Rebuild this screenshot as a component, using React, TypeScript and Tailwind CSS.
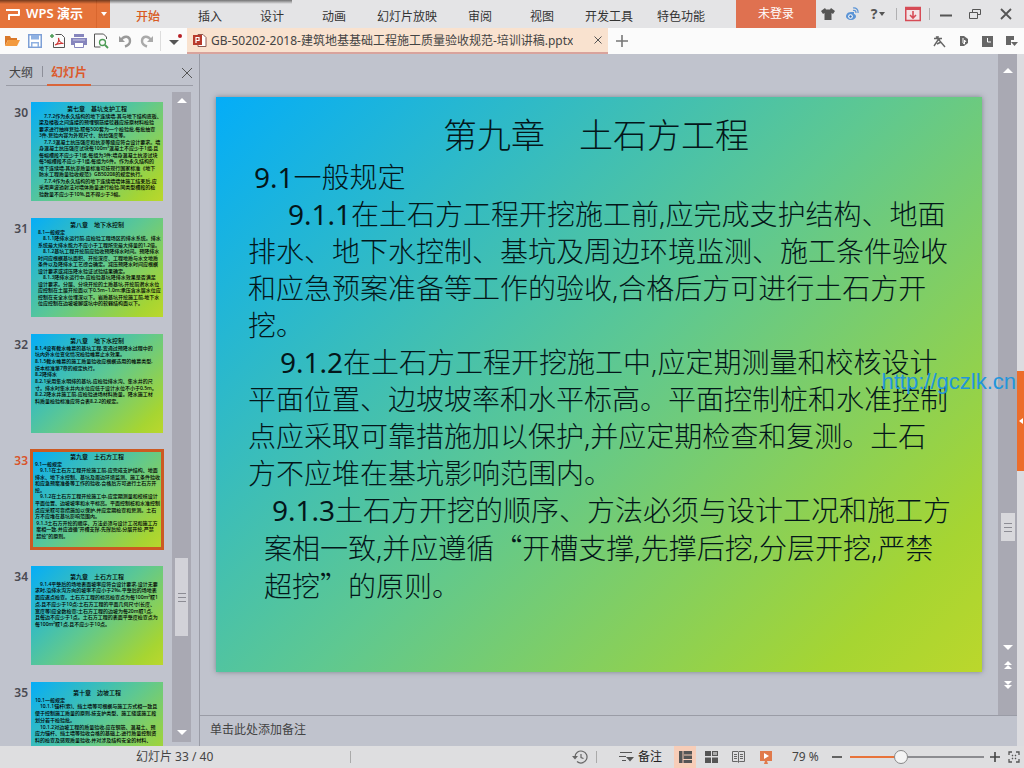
import { useState } from 'react'
import type { ReactNode } from 'react'
import clsx from 'clsx'

const MENU = [
  { label: '开始', width: 'w-[62px]', active: true },
  { label: '插入', width: 'w-[62px]' },
  { label: '设计', width: 'w-[62px]' },
  { label: '动画', width: 'w-[62px]' },
  { label: '幻灯片放映', width: 'w-[84px]' },
  { label: '审阅', width: 'w-[62px]' },
  { label: '视图', width: 'w-[62px]' },
  { label: '开发工具', width: 'w-[72px]' },
  { label: '特色功能', width: 'w-[72px]' },
]

type Thumb = { no: number; title: string; height: string; top: string; inset: string; lines: string[] }

const THUMBS: Thumb[] = [
  {
    no: 30,
    title: '第七章　基坑支护工程',
    height: 'h-[91px]',
    top: 'pt-1',
    inset: 'pl-2',
    lines: [
      '　7.7.2作为永久结构的地下连续墙,其与地下结构底板、',
      '梁及楼板之间连接的预埋钢筋接驳器应按原材料检验',
      '要求进行抽样复验,取每500套为一个检验批,每批抽查',
      '3件,复验内容为外观尺寸、抗拉强度等。',
      '　7.7.3混凝土抗压强度和抗渗等级应符合设计要求。墙',
      '身混凝土抗压强度试块每100m³混凝土不应少于1组,且',
      '每幅槽段不应少于1组,每组为3件;墙身混凝土抗渗试块',
      '每5幅槽段不应少于1组,每组为6件。作为永久结构的',
      '地下连续墙,其抗渗质量标准可按现行国家标准《地下',
      '防水工程质量验收规范》GB50208的规定执行。',
      '　7.7.4作为永久结构的地下连续墙墙体施工结束后,应',
      '采用声波透射法对墙体质量进行检验,同类型槽段的检',
      '验数量不应少于10%,且不得少于3幅。',
    ],
  },
  {
    no: 31,
    title: '第八章　地下水控制',
    height: 'h-[84px]',
    top: 'pt-1',
    inset: 'pl-[7px]',
    lines: [
      '8.1一般规定',
      '　8.1.1降排水运行前,应检验工程场区的排水系统。排水',
      '系统最大排水能力不应小于工程所需最大排量的1.2倍。',
      '　8.1.2基坑工程开挖前应验收预降排水时间。预降排水',
      '时间应根据基坑面积、开挖深度、工程地质与水文地质',
      '条件以及降排水工艺综合确定。减压预降水时间应根据',
      '设计要求或减压降水验证试验结果确定。',
      '　8.1.3降排水运行中,应检验基坑降排水效果是否满足',
      '设计要求。分层、分块开挖的土质基坑,开挖前潜水水位',
      '应控制在土层开挖面以下0.5m~1.0m;承压含水层水位应',
      '控制在安全水位埋深以下。岩质基坑开挖施工前,地下水',
      '位应控制在边坡坡脚或坑中的软弱结构面以下。',
    ],
  },
  {
    no: 32,
    title: '第八章　地下水控制',
    height: 'h-[66px]',
    top: 'pt-1',
    inset: 'pl-1',
    lines: [
      '8.1.4设有截水帷幕的基坑工程,宜通过预降水过程中的',
      '坑内外水位变化情况检验帷幕止水效果。',
      '8.1.5截水帷幕的施工质量验收应根据选用的帷幕类型,',
      '按本标准第7章的规定执行。',
      '8.2降排水',
      '8.2.1采用集水明排的基坑,应检验排水沟、集水井的尺',
      '寸。排水时集水井内水位应低于设计水位不小于0.5m。',
      '8.2.2降水井施工前,应检验进场材料质量。降水施工材',
      '料质量检验标准应符合表8.2.2的规定。',
    ],
  },
  {
    no: 33,
    title: '第九章　土石方工程',
    height: 'h-[85px]',
    top: 'pt-1',
    inset: 'pl-1',
    lines: [
      '9.1一般规定',
      '　9.1.1在土石方工程开挖施工前,应完成支护结构、地面',
      '排水、地下水控制、基坑及周边环境监测、施工条件验收',
      '和应急预案准备等工作的验收,合格后方可进行土石方开',
      '挖。',
      '　9.1.2在土石方工程开挖施工中,应定期测量和校核设计',
      '平面位置、边坡坡率和水平标高。平面控制桩和水准控制',
      '点应采取可靠措施加以保护,并应定期检查和复测。土石',
      '方不应堆在基坑影响范围内。',
      ' 9.1.3土石方开挖的顺序、方法必须与设计工况和施工方',
      ' 案相一致,并应遵循“开槽支撑,先撑后挖,分层开挖,严禁',
      ' 超挖”的原则。',
    ],
  },
  {
    no: 34,
    title: '第九章　土石方工程',
    height: 'h-[53px]',
    top: 'pt-2',
    inset: 'pl-1',
    lines: [
      '　9.1.4平整后的场地表面坡率应符合设计要求,设计无要',
      '求时,沿排水沟方向的坡率不应小于2‰,平整后的场地表',
      '面应逐点检查。土石方工程的标高检查点为每100m²取1',
      '点,且不应少于10点;土石方工程的平面几何尺寸(长度、',
      '宽度等)应全数检查;土石方工程的边坡为每20m取1点,',
      '且每边不应少于1点。土石方工程的表面平整度检查点为',
      '每100m²取1点,且不应少于10点。',
    ],
  },
  {
    no: 35,
    title: '第十章　边坡工程',
    height: 'h-[53px]',
    top: 'pt-2',
    inset: 'pl-1',
    lines: [
      '10.1一般规定',
      '　10.1.1锚杆(索)、挡土墙等可根据与施工方式相一致且',
      '便于控制施工质量的原则,按支护类型、施工缝或施工段',
      '划分若干检验批。',
      '　10.1.2对边坡工程的质量验收,应在钢筋、混凝土、预',
      '应力锚杆、挡土墙等验收合格的基础上,进行质量控制资',
      '料的检查及感观质量验收,并对涉及结构安全的材料、',
    ],
  },
]

const SLIDE_LINES = [
  { no: '9.1', text: '一般规定', indent: 'pl-1.5' },
  { no: '9.1.1', text: '在土石方工程开挖施工前,应完成支护结构、地面', indent: 'pl-10' },
  { text: '排水、地下水控制、基坑及周边环境监测、施工条件验收', indent: 'pl-0' },
  { text: '和应急预案准备等工作的验收,合格后方可进行土石方开', indent: 'pl-0' },
  { text: '挖。', indent: 'pl-0' },
  { no: '9.1.2', text: '在土石方工程开挖施工中,应定期测量和校核设计', indent: 'pl-8' },
  { text: '平面位置、边坡坡率和水平标高。平面控制桩和水准控制', indent: 'pl-0' },
  { text: '点应采取可靠措施加以保护,并应定期检查和复测。土石', indent: 'pl-0' },
  { text: '方不应堆在基坑影响范围内。', indent: 'pl-0' },
  { no: '9.1.3', text: '土石方开挖的顺序、方法必须与设计工况和施工方', indent: 'pl-6' },
  { text: '案相一致,并应遵循“开槽支撑,先撑后挖,分层开挖,严禁', indent: 'pl-4' },
  { text: '超挖”的原则。', indent: 'pl-4' },
]

const GRADIENT = 'bg-[linear-gradient(135deg,#04adf8_0%,#5ec891_50%,#a6d532_88%,#bbd72c_100%)]'

function Svg({ children, w = 16, h = 16 }: { children: ReactNode; w?: number; h?: number }) {
  return (
    <svg width={w} height={h} viewBox={`0 0 ${w} ${h}`} fill="none" aria-hidden="true">
      {children}
    </svg>
  )
}

function IconButton({ label, className, children }: { label: string; className?: string; children: ReactNode }) {
  return (
    <button type="button" aria-label={label} className={clsx('flex shrink-0 items-center justify-center', className)}>
      {children}
    </button>
  )
}

function TitleBar() {
  return (
    <header className="flex h-7 shrink-0 items-stretch bg-[#e4e4e6]">
      <button type="button" className="flex w-[110px] shrink-0 items-center bg-[#e5733a] pl-1.5 text-white">
        <Svg w={16} h={14}>
          <path d="M0 3h13v5H3v5" stroke="#fff" strokeWidth="2" strokeLinejoin="round" />
        </Svg>
        <span className="ml-1 text-[13px] font-semibold whitespace-nowrap">WPS 演示</span>
        <span className="ml-auto flex h-full w-3.5 items-center justify-center border-l border-[#d9662e]">
          <Svg w={6} h={4}><path d="M0 0h6L3 4z" fill="#fff" /></Svg>
        </span>
      </button>
      <nav className="ml-[7px] flex items-stretch">
        {MENU.map((m) => (
          <button
            key={m.label}
            type="button"
            className={clsx('pt-1.5 text-center whitespace-nowrap', m.width, m.active ? 'font-medium text-[#d85a22]' : 'text-[#333]')}
          >
            {m.label}
          </button>
        ))}
      </nav>
      <div className="ml-auto flex items-stretch">
        <button type="button" className="w-20 bg-[#df7150] text-white">未登录</button>
        <IconButton label="皮肤" className="w-6">
          <Svg w={14} h={14}><path d="M4 1 0 4l2 3 1.500-1V13h7V6L12 7l2-3-4-3-1 1.500H5z" fill="#555" /></Svg>
        </IconButton>
        <IconButton label="微博" className="w-6">
          <Svg w={14} h={14}>
            <path d="M6 5C2 5 1 8 1 9.500S3 13 6 13s5-2 5-3.500S10 7 9 7V5z" fill="#5b94d6" />
            <circle cx="5.500" cy="9.500" r="2.300" fill="#fff" />
            <circle cx="5.500" cy="9.500" r="1.200" fill="#3a6fb5" />
            <path d="M8 3.500c2-.5 3 .5 3 2.500M8 1c3-.5 5.500 1.500 5 5" stroke="#5b94d6" strokeWidth="1.200" />
          </Svg>
        </IconButton>
        <IconButton label="帮助" className="w-7 gap-0.5">
          <span className="text-sm font-bold text-[#555]">?</span>
          <Svg w={6} h={4}><path d="M0 0h6L3 4z" fill="#555" /></Svg>
        </IconButton>
        <span className="my-2 ml-1 w-px bg-[#b0b0b2]" />
        <IconButton label="下载" className="w-8">
          <Svg w={16} h={16}>
            <path d="M.75 1.500h14.500v13H.75z" fill="#f3e4e6" stroke="#d64b56" strokeWidth="1.500" />
            <path d="M0 1h16v3H0z" fill="#d64b56" />
            <path d="M8 5v7M5 9l3 3 3-3" stroke="#d64b56" strokeWidth="1.600" />
          </Svg>
        </IconButton>
        <span className="my-2 w-px bg-[#b0b0b2]" />
        <IconButton label="最小化" className="w-8">
          <Svg w={12} h={12}><path d="M0 7.500h12" stroke="#555" strokeWidth="2" /></Svg>
        </IconButton>
        <IconButton label="还原" className="w-[26px]">
          <Svg w={12} h={12}><path d="M3.500 4V1.500h8v5H9M.5 4.500h8v6h-8z" stroke="#555" /></Svg>
        </IconButton>
        <IconButton label="关闭" className="w-9">
          <Svg w={12} h={12}><path d="m1 1 10 10M11 1 1 11" stroke="#555" strokeWidth="1.800" /></Svg>
        </IconButton>
      </div>
    </header>
  )
}

function QuickBar() {
  return (
    <div className="flex h-[26px] shrink-0 items-stretch bg-[#fbfbfb]">
      <div className="flex w-[187px] shrink-0 items-center pl-1">
        <IconButton label="打开" className="w-[22px] justify-start">
          <Svg>
            <path d="M1 13V3h5l1 2h6v2H4z" fill="#d9782a" />
            <path d="M4 7h12l-3 6H1z" fill="#f39a3f" />
          </Svg>
        </IconButton>
        <IconButton label="保存" className="w-[22px] justify-start pl-0.5">
          <Svg w={14} h={14}>
            <path d="M.75.75h12.500v12.500H.75z" fill="#fff" stroke="#7d9fd6" strokeWidth="1.500" />
            <path d="M3 1h8v4.500H3zM3 8h8v5H3z" fill="#8fb1e2" />
            <path d="M4.500 9.500h5v3h-5z" fill="#fff" />
          </Svg>
        </IconButton>
        <IconButton label="输出为PDF" className="w-[22px] justify-start">
          <Svg w={18} h={16}>
            <path d="M7.500 1.500h6l3 3v10h-11V9" stroke="#555" />
            <path d="M4 1v4M2 3h4" stroke="#4c9b55" strokeWidth="1.500" />
            <path d="M7 12c4-2 4-5 3.500-7 .5 4 2 5 5 5.500-3-.5-6 0-8.500 1.500z" stroke="#cf3737" strokeWidth="1.200" />
          </Svg>
        </IconButton>
        <IconButton label="打印" className="w-[22px] justify-start pl-px">
          <Svg>
            <path d="M3 1h10v3H3z" fill="#8685bd" />
            <path d="M0 5h16v7H0z" fill="#8685bd" />
            <path d="M3.500 9.500h9v5h-9z" fill="#fff" stroke="#8685bd" />
            <path d="M2 7h12" stroke="#c9c8e6" />
          </Svg>
        </IconButton>
        <IconButton label="打印预览" className="w-[22px] justify-start pl-0.5">
          <Svg>
            <path d="M12.500 6V4l-3-3H.5v13h6" stroke="#555" />
            <circle cx="8.500" cy="9.500" r="3" stroke="#4c9b55" strokeWidth="1.300" />
            <path d="m11 12 3 3" stroke="#4c9b55" strokeWidth="1.800" />
          </Svg>
        </IconButton>
        <IconButton label="撤销" className="w-[22px]">
          <Svg w={14} h={14}><path d="M3 6c3-5 9-4 9 1 0 3-2 4.500-5 5.500" stroke="#9a9a9a" strokeWidth="2.400" /><path d="M1 2v6h6z" fill="#9a9a9a" /></Svg>
        </IconButton>
        <IconButton label="恢复" className="w-[22px]">
          <Svg w={14} h={14}><path d="M11 6C8 1 2 2 2 7c0 3 2 4.500 5 5.500" stroke="#aaa" strokeWidth="2.400" /><path d="M13 2v6H7z" fill="#aaa" /></Svg>
        </IconButton>
        <span className="ml-0.5 h-5 w-px bg-[#ddd]" />
        <IconButton label="自定义" className="ml-1.5 w-4">
          <Svg w={14} h={14}><path d="M1 6h10l-5 5z" fill="#555" /><circle cx="12" cy="2" r="2" fill="#b71f26" /></Svg>
        </IconButton>
      </div>
      <div className="flex w-[421px] min-w-0 items-center border-b-2 border-[#d9a39c] bg-[#f9e2cf] pl-1.5">
        <Svg w={14} h={15}>
          <path d="M5 1.500h5l3 3v9H5z" fill="#fff" stroke="#8d5a52" />
          <path d="M0 2h9v10H0z" fill="#b83a2c" />
          <path d="M3 10V4.500h3v3H3" stroke="#fff" strokeWidth="1.200" />
        </Svg>
        <span className="ml-1 truncate pt-0.5 text-[#444]">GB-50202-2018-建筑地基基础工程施工质量验收规范-培训讲稿.pptx</span>
        <IconButton label="关闭标签" className="mr-0.5 ml-auto w-4">
          <Svg w={8} h={8}><path d="m.5.5 7 7M7.500.5l-7 7" stroke="#555" /></Svg>
        </IconButton>
      </div>
      <IconButton label="新建标签" className="w-7">
        <Svg w={12} h={12}><path d="M6 0v12M0 6h12" stroke="#777" strokeWidth="1.600" /></Svg>
      </IconButton>
      <div className="ml-auto flex items-center gap-3 pr-1.5">
        <IconButton label="工具">
          <Svg w={13} h={13}><path d="M1 3.500h8M5 1v4L1 11M6 5l6 7M8 7l-4 2M3 1.500l4 4" stroke="#666" strokeWidth="1.400" /></Svg>
        </IconButton>
        <IconButton label="文档">
          <Svg w={12} h={12}><path d="M2 1h4l4 3v4l-4 3H2z" fill="#666" /><path d="M5 3v5l1.500 1V5L8 7" stroke="#fff" /></Svg>
        </IconButton>
        <IconButton label="历史">
          <Svg w={11} h={11}><path d="M0 0h11v11H0z" fill="#666" /><path d="M5.500 2v4H9" stroke="#fff" /></Svg>
        </IconButton>
        <IconButton label="更多">
          <Svg w={13} h={12}><path d="M1 1h8v4H6v5H1z" fill="#666" /><path d="M6 7h7l-3.500 4z" fill="#666" /></Svg>
        </IconButton>
      </div>
    </div>
  )
}

function Thumbnail({ thumb, active, onSelect }: { thumb: Thumb; active: boolean; onSelect: () => void }) {
  return (
    <li className="flex items-start">
      <span className={clsx('w-7 shrink-0 pt-[3px] text-right text-xs font-semibold', active ? 'text-[#d9542b]' : 'text-[#4a4a52]')}>
        {thumb.no}
      </span>
      <button
        type="button"
        onClick={onSelect}
        aria-label={`幻灯片 ${thumb.no}`}
        className={clsx(
          'ml-[3px] h-[99px] min-w-0 flex-1 overflow-hidden text-left',
          GRADIENT,
          active && 'outline-3 -outline-offset-2 outline-[#cc5a22]',
        )}
      >
        <span className={clsx('flex h-full flex-col font-medium text-black', thumb.top)}>
          <span className={clsx('flex shrink-0 flex-col justify-between', thumb.height)}>
            <span className="block text-center text-[6px] leading-[6px] whitespace-pre">{thumb.title}</span>
            {thumb.lines.map((line) => (
              <span key={line} className={clsx('block text-[5px] leading-[6px] whitespace-pre', thumb.inset)}>{line}</span>
            ))}
          </span>
        </span>
      </button>
    </li>
  )
}

function SlidePanel() {
  const [current, setCurrent] = useState(33)
  return (
    <aside className="flex w-[200px] shrink-0 flex-col border-r border-[#9a9ca6]">
      <div className="mx-1.5 flex h-8 shrink-0 items-stretch border-b border-[#9a9ca6]">
        <button type="button" className="px-[3px] pt-1.5 text-[#444]">大纲</button>
        <span className="mt-3 mb-2 ml-1.5 w-px bg-[#8d8f99]" />
        <button type="button" className="-mb-px ml-1 border-b-2 border-[#d9653a] px-1 pt-2 font-bold text-[#dc5a2c]">幻灯片</button>
        <IconButton label="关闭窗格" className="ml-auto pt-1.5">
          <Svg w={12} h={12}><path d="m1 1 10 10M11 1 1 11" stroke="#555" /></Svg>
        </IconButton>
      </div>
      <div className="flex min-h-0 flex-1">
        <ul className="flex w-[164px] flex-col gap-[17px] overflow-hidden pt-4 pr-px">
          {THUMBS.map((t) => (
            <Thumbnail key={t.no} thumb={t} active={t.no === current} onSelect={() => setCurrent(t.no)} />
          ))}
        </ul>
        <div className="mt-1.5 mb-1 ml-2 flex w-[19px] flex-col items-center bg-[#a9a9b3]">
          <IconButton label="向上滚动" className="h-4 w-full">
            <Svg w={10} h={5}><path d="M0 5h10L5 0z" fill="#fff" /></Svg>
          </IconButton>
          <div className="flex-[451]" />
          <div className="flex w-[13px] flex-[78] flex-col items-center justify-center gap-[3px] bg-[#d2d2d8]">
            <span className="h-px w-2 bg-[#8c8c94]" />
            <span className="h-px w-2 bg-[#8c8c94]" />
            <span className="h-px w-2 bg-[#8c8c94]" />
          </div>
          <div className="flex-[86]" />
          <IconButton label="向下滚动" className="h-5 w-full">
            <Svg w={10} h={5}><path d="M0 0h10L5 5z" fill="#fff" /></Svg>
          </IconButton>
        </div>
      </div>
    </aside>
  )
}

// curly quotes take a full em in the CJK face
function SlideText({ text }: { text: string }) {
  return text.split(/([“”])/).map((part, i) =>
    part === '“' || part === '”' ? (
      <span key={i} className="font-['Noto_Sans_CJK_SC',sans-serif]">{part}</span>
    ) : (
      part
    ),
  )
}

function Editor() {
  return (
    <div className="flex min-h-0 flex-1">
      <main className="min-w-0 flex-1 overflow-hidden px-4 pt-[43px]">
        <article className={clsx('aspect-[4/3] overflow-hidden pt-4 text-[#04161a] shadow-[0_0_5px_rgba(60,70,80,0.5)]', GRADIENT)}>
          <h1 className="pr-1.5 text-center text-[34px] leading-[44px] font-light whitespace-nowrap">第九章　土石方工程</h1>
          <div className="mt-0.5 pl-8 text-[28px] leading-[37px] font-light whitespace-nowrap">
            {SLIDE_LINES.map((l) => (
              <p key={l.text} className={l.indent}>
                {l.no && <span className="font-normal">{l.no}</span>}
                <SlideText text={l.text} />
              </p>
            ))}
          </div>
        </article>
      </main>
      <div className="flex w-[19px] shrink-0 flex-col items-center bg-[#a9a9b3]">
        <IconButton label="上一屏" className="h-8 w-full">
          <Svg w={10} h={5}><path d="M0 5h10L5 0z" fill="#fff" /></Svg>
        </IconButton>
        <div className="flex-[428]" />
        <div className="flex w-3.5 flex-[28] flex-col items-center justify-center gap-[3px] bg-[#d8d8dc]">
          <span className="h-px w-2 bg-[#8c8c94]" />
          <span className="h-px w-2 bg-[#8c8c94]" />
          <span className="h-px w-2 bg-[#8c8c94]" />
        </div>
        <div className="flex-[98]" />
        <IconButton label="下一屏" className="h-4 w-full">
          <Svg w={10} h={5}><path d="M0 0h10L5 5z" fill="#fff" /></Svg>
        </IconButton>
        <IconButton label="上一张" className="h-5 w-full">
          <Svg w={8} h={8}><path d="M0 4h8L4 0zM0 8h8L4 4z" fill="#fff" /></Svg>
        </IconButton>
        <IconButton label="下一张" className="mb-5 h-5 w-full">
          <Svg w={8} h={8}><path d="M0 0h8L4 4zM0 4h8L4 8z" fill="#fff" /></Svg>
        </IconButton>
      </div>
    </div>
  )
}

function StatusBar() {
  const [zoom, setZoom] = useState(79)
  const pos = Math.round(((zoom - 10) / 190) * 100)
  return (
    <footer className="flex h-[22px] shrink-0 items-center bg-[#dedee0] text-[#444]">
      <span className="ml-[136px] w-[215px] border-r border-[#aaa] leading-3 whitespace-nowrap">幻灯片 33 / 40</span>
      <div className="ml-auto flex items-center">
        <IconButton label="备份">
          <Svg w={16} h={14}>
            <path d="M3 7a6 6 0 1 1 2 4.500" stroke="#666" strokeWidth="1.200" />
            <path d="M0 6h6L3 9.500z" fill="#666" />
            <path d="M9 4v3.500l2.500 1" stroke="#666" strokeWidth="1.200" />
          </Svg>
        </IconButton>
        <span className="ml-2 h-3 w-px bg-[#aaa]" />
        <button type="button" className="ml-[22px] flex items-center gap-1 whitespace-nowrap text-[#222]">
          <Svg w={15} h={12}><path d="M1 1.500h12M0 5.500h7M3 9.500h4" stroke="#555" /><path d="M7 6h8l-4 4.500z" fill="#555" /></Svg>
          备注
        </button>
        <IconButton label="普通视图" className="ml-3 h-[22px] w-[22px] bg-[#f7cdb8]">
          <Svg w={13} h={12}><path d="M0 0h3.500v12H0zM4.500 0H13v8H4.500zM4.500 9H13v3H4.500z" fill="#555" /><path d="M5 4h8" stroke="#f7cdb8" /></Svg>
        </IconButton>
        <IconButton label="幻灯片浏览" className="ml-[9px]">
          <Svg w={13} h={12}><path d="M0 0h6v5H0zM7 0h6v5H7zM0 6.500h6V12H0zM7 6.500h6V12H7z" fill="#555" /><path d="M8 1h4v3H8z" fill="#aaa" /></Svg>
        </IconButton>
        <IconButton label="阅读视图" className="ml-3.5">
          <Svg w={13} h={12}><path d="M.5.5h5.500l.5 1 .5-1h5.500v10H7.500l-1 1-1-1H.5zM6.500 1.500V11M2 3.500h3M2 5.500h3M2 7.500h3M8 3.500h3M8 5.500h3M8 7.500h3" stroke="#666" /></Svg>
        </IconButton>
        <IconButton label="放映" className="ml-[15px]">
          <Svg w={12} h={13}><path d="M0 0h12v10H7l1 3H4l1-3H0z" fill="#e07a4c" /><path d="M4 2v6l5-3z" fill="#fff" /></Svg>
        </IconButton>
        <span className="ml-5 w-8 whitespace-nowrap">{zoom} %</span>
        <IconButton label="缩小" className="ml-2">
          <Svg w={10} h={10}><path d="M0 5h10" stroke="#444" strokeWidth="1.600" /></Svg>
        </IconButton>
        <input
          type="range"
          min={10}
          max={200}
          value={zoom}
          onChange={(e) => setZoom(Number(e.target.value))}
          aria-label="显示比例"
          className="ml-2 h-4 w-[134px] appearance-none bg-[length:100%_2px] bg-center bg-no-repeat [&::-webkit-slider-thumb]:h-3.5 [&::-webkit-slider-thumb]:w-3.5 [&::-webkit-slider-thumb]:appearance-none [&::-webkit-slider-thumb]:rounded-full [&::-webkit-slider-thumb]:border [&::-webkit-slider-thumb]:border-[#888] [&::-webkit-slider-thumb]:bg-[#f4f4f4]"
          style={{ backgroundImage: `linear-gradient(to right, #e8733a ${pos}%, #8c8c90 ${pos}%)` }}
        />
        <IconButton label="放大" className="ml-1.5">
          <Svg w={10} h={10}><path d="M0 5h10M5 0v10" stroke="#444" strokeWidth="1.600" /></Svg>
        </IconButton>
        <IconButton label="适应窗口" className="mr-1 ml-2">
          <Svg w={12} h={12}><path d="M1 4V1h3M8 1h3v3M11 8v3H8M4 11H1V8M4 4l1 1M8 4 7 5M4 8l1-1M8 8 7 7" stroke="#555" strokeWidth="1.300" /></Svg>
        </IconButton>
      </div>
    </footer>
  )
}

export default function App() {
  return (
    <div className="relative flex h-screen flex-col overflow-hidden bg-[#c0c3cd] font-['Noto_Sans','Noto_Sans_CJK_SC',sans-serif] text-xs">
      <TitleBar />
      <QuickBar />
      <div className="flex min-h-0 flex-1">
        <SlidePanel />
        <div className="flex min-w-0 flex-1 flex-col">
          <Editor />
          <textarea
            aria-label="备注"
            placeholder="单击此处添加备注"
            className="h-[31px] shrink-0 resize-none border-t border-[#9a9ca6] px-2.5 pt-1.5 leading-4 outline-none placeholder:text-[#444]"
          />
        </div>
        <div className="flex w-[7px] shrink-0 flex-col bg-[#dcdce0]">
          <div className="flex-[317]" />
          <IconButton label="展开任务窗格" className="flex-[100] bg-[#ec6d2b]">
            <Svg w={4} h={6}><path d="M4 0v6L0 3z" fill="#fff" /></Svg>
          </IconButton>
          <div className="flex-[275]" />
        </div>
      </div>
      <StatusBar />
      {/* shadow of the window above */}
      <div className="pointer-events-none absolute top-0 left-0 h-1 w-[292px] bg-linear-to-b from-black/50 to-transparent" />
      <a href="http://gczlk.cn" className="absolute top-[369px] right-2 font-['Liberation_Sans',Arial,sans-serif] text-[22px] leading-[26px] text-[#2196dc]">
        http://gczlk.cn
      </a>
    </div>
  )
}
